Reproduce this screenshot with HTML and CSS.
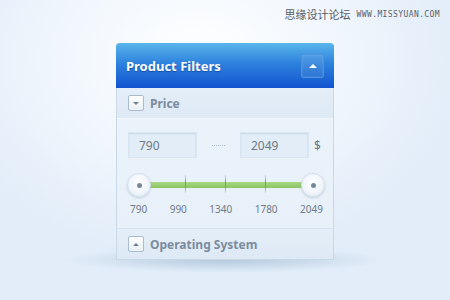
FILE: index.html
```html
<!DOCTYPE html>
<html lang="en">
<head>
    <meta charset="UTF-8">
    <title>Product Filters</title>
    <link rel="stylesheet" href="styles.css">
</head>
<body>
    <div class="watermark"><span class="wm-cn">思缘设计论坛</span><span class="wm-url">WWW.MISSYUAN.COM</span></div>

    <div class="panel">
        <div class="panel-head">
            <h1>Product Filters</h1>
            <button class="head-toggle"><span class="tri-up white"></span></button>
        </div>

        <div class="section-bar">
            <span class="mini-toggle"><span class="tri-down"></span></span>
            <span class="section-title">Price</span>
        </div>

        <div class="price-body">
            <div class="price-inputs">
                <input class="price-box" type="text" value="790">
                <span class="dots"><span class="dotline"></span></span>
                <input class="price-box" type="text" value="2049">
                <span class="currency">$</span>
            </div>

            <div class="slider">
                <div class="track">
                    <span class="tick" style="left: 26.6%"></span>
                    <span class="tick" style="left: 50.3%"></span>
                    <span class="tick" style="left: 74%"></span>
                </div>
                <span class="thumb left"></span>
                <span class="thumb right"></span>
            </div>

            <div class="scale">
                <span>790</span>
                <span>990</span>
                <span>1340</span>
                <span>1780</span>
                <span>2049</span>
            </div>
        </div>

        <div class="section-bar last">
            <span class="mini-toggle"><span class="tri-up"></span></span>
            <span class="section-title">Operating System</span>
        </div>
    </div>
    <div class="panel-shadow"></div>
</body>
</html>
```

FILE: styles.css
```css
body {
    margin: 0;
    width: 450px;
    height: 300px;
    overflow: hidden;
    font-family: "Noto Sans", "Open Sans", sans-serif;
    background: radial-gradient(ellipse 260px 200px at 200px 60px, #ffffff 0%, #f3f8fd 45%, #e2edf9 100%);
}
.watermark {
    position: absolute;
    top: 6px;
    right: 10px;
    display: flex;
    align-items: center;
    gap: 6px;
    color: #555b63;
}
.wm-cn {
    font-family: "Noto Sans CJK SC", sans-serif;
    font-size: 11px;
}
.wm-url {
    font-family: "DejaVu Sans Mono", monospace;
    font-size: 8px;
    letter-spacing: 0.4px;
    color: #5a6068;
}
.panel {
    width: 216px;
    margin: 43px 0 0 116px;
    border: 1px solid #c9d8e6;
    border-top: none;
    border-radius: 4px 4px 0 0;
    background: #e9f1f9;
    position: relative;
    z-index: 1;
}
.panel-head {
    height: 45px;
    margin: 0 -1px;
    border-radius: 4px 4px 0 0;
    background: linear-gradient(to bottom, #5ab6eb 0%, #2d82dd 45%, #1254d0 100%);
    display: flex;
    align-items: center;
    justify-content: space-between;
    padding: 0 10px 0 10px;
}
.panel-head h1 {
    margin: 0;
    font-size: 13px;
    font-weight: bold;
    color: #ffffff;
    text-shadow: 0 1px 1px rgba(0, 30, 90, 0.45);
}
.head-toggle {
    width: 23px;
    height: 24px;
    border: 1px solid #4a92dc;
    border-radius: 2px;
    background: linear-gradient(to bottom, #509ce4, #2b74d4);
    box-shadow: 0 0 2px rgba(255, 255, 255, 0.25) inset;
    display: flex;
    align-items: center;
    justify-content: center;
    padding: 0;
}
.tri-up, .tri-down {
    width: 0;
    height: 0;
    border-left: 3px solid transparent;
    border-right: 3px solid transparent;
}
.tri-up {
    border-bottom: 3px solid #6f7f90;
}
.tri-down {
    border-top: 3px solid #6f7f90;
}
.tri-up.white {
    border-left-width: 4px;
    border-right-width: 4px;
    border-bottom: 4px solid #ffffff;
}
.section-bar {
    height: 30px;
    display: flex;
    align-items: center;
    gap: 6px;
    padding-left: 11px;
    background: linear-gradient(to bottom, #e4eef8, #dde9f5);
    border-bottom: 1px solid #f6f9fc;
}
.section-bar.last {
    border-top: 1px solid #d7e4f0;
    border-bottom: none;
}
.mini-toggle {
    width: 14px;
    height: 14px;
    border: 1px solid #a9bccd;
    border-radius: 2px;
    background: linear-gradient(to bottom, #ffffff, #e8eff6);
    display: flex;
    align-items: center;
    justify-content: center;
}
.section-title {
    font-size: 12px;
    font-weight: bold;
    color: #7b8b9d;
}
.price-body {
    padding: 13px 10px 12px 11px;
    background: linear-gradient(to bottom, #eaf2fa, #e8f0f9);
}
.price-inputs {
    display: flex;
    align-items: center;
}
.price-box {
    width: 69px;
    height: 26px;
    box-sizing: border-box;
    border: 1px solid #d9e5f1;
    background: #e2edf8;
    box-shadow: 0 1px 2px rgba(120, 150, 180, 0.25) inset;
    font-family: "Noto Sans", "Open Sans", sans-serif;
    font-size: 12px;
    color: #6d7884;
    padding: 0 0 0 10px;
    outline: none;
}
.dots {
    width: 43px;
    display: flex;
    justify-content: center;
}
.dotline {
    width: 13px;
    height: 0;
    border-bottom: 1px dotted #aebccb;
}
.currency {
    margin-left: 5px;
    font-size: 12px;
    color: #6d7884;
}
.slider {
    position: relative;
    height: 28px;
    margin-top: 13px;
}
.track {
    position: absolute;
    left: 12px;
    right: 14px;
    top: 11px;
    height: 6px;
    background: linear-gradient(to bottom, #a8d884, #8cc466);
    border-radius: 2px;
}
.tick {
    position: absolute;
    top: -7px;
    width: 1px;
    height: 18px;
    background: linear-gradient(to bottom, rgba(130, 150, 120, 0.2), #7f9a6f 40%, #7f9a6f 60%, rgba(130, 150, 120, 0.2));
}
.thumb {
    position: absolute;
    top: 2px;
    width: 24px;
    height: 24px;
    box-sizing: border-box;
    border-radius: 50%;
    border: 1px solid #d2dfeb;
    background: radial-gradient(circle at 50% 40%, #ffffff 0%, #f1f6fb 55%, #dde8f3 100%);
    box-shadow: 0 1px 2px rgba(100, 130, 160, 0.3);
}
.thumb::after {
    content: "";
    position: absolute;
    left: 9px;
    top: 9px;
    width: 5px;
    height: 5px;
    border-radius: 50%;
    background: #75879a;
}
.thumb.left {
    left: -1px;
}
.thumb.right {
    right: -2px;
}
.scale {
    display: flex;
    justify-content: space-between;
    margin-top: 3px;
    padding: 0 0 0 2px;
    font-size: 10px;
    color: #6f7a86;
}
.panel-shadow {
    width: 320px;
    height: 26px;
    margin: -8px 0 0 65px;
    background: radial-gradient(ellipse 50% 50% at 50% 30%, rgba(135, 165, 195, 0.5), rgba(140, 170, 200, 0) 100%);
}
```
